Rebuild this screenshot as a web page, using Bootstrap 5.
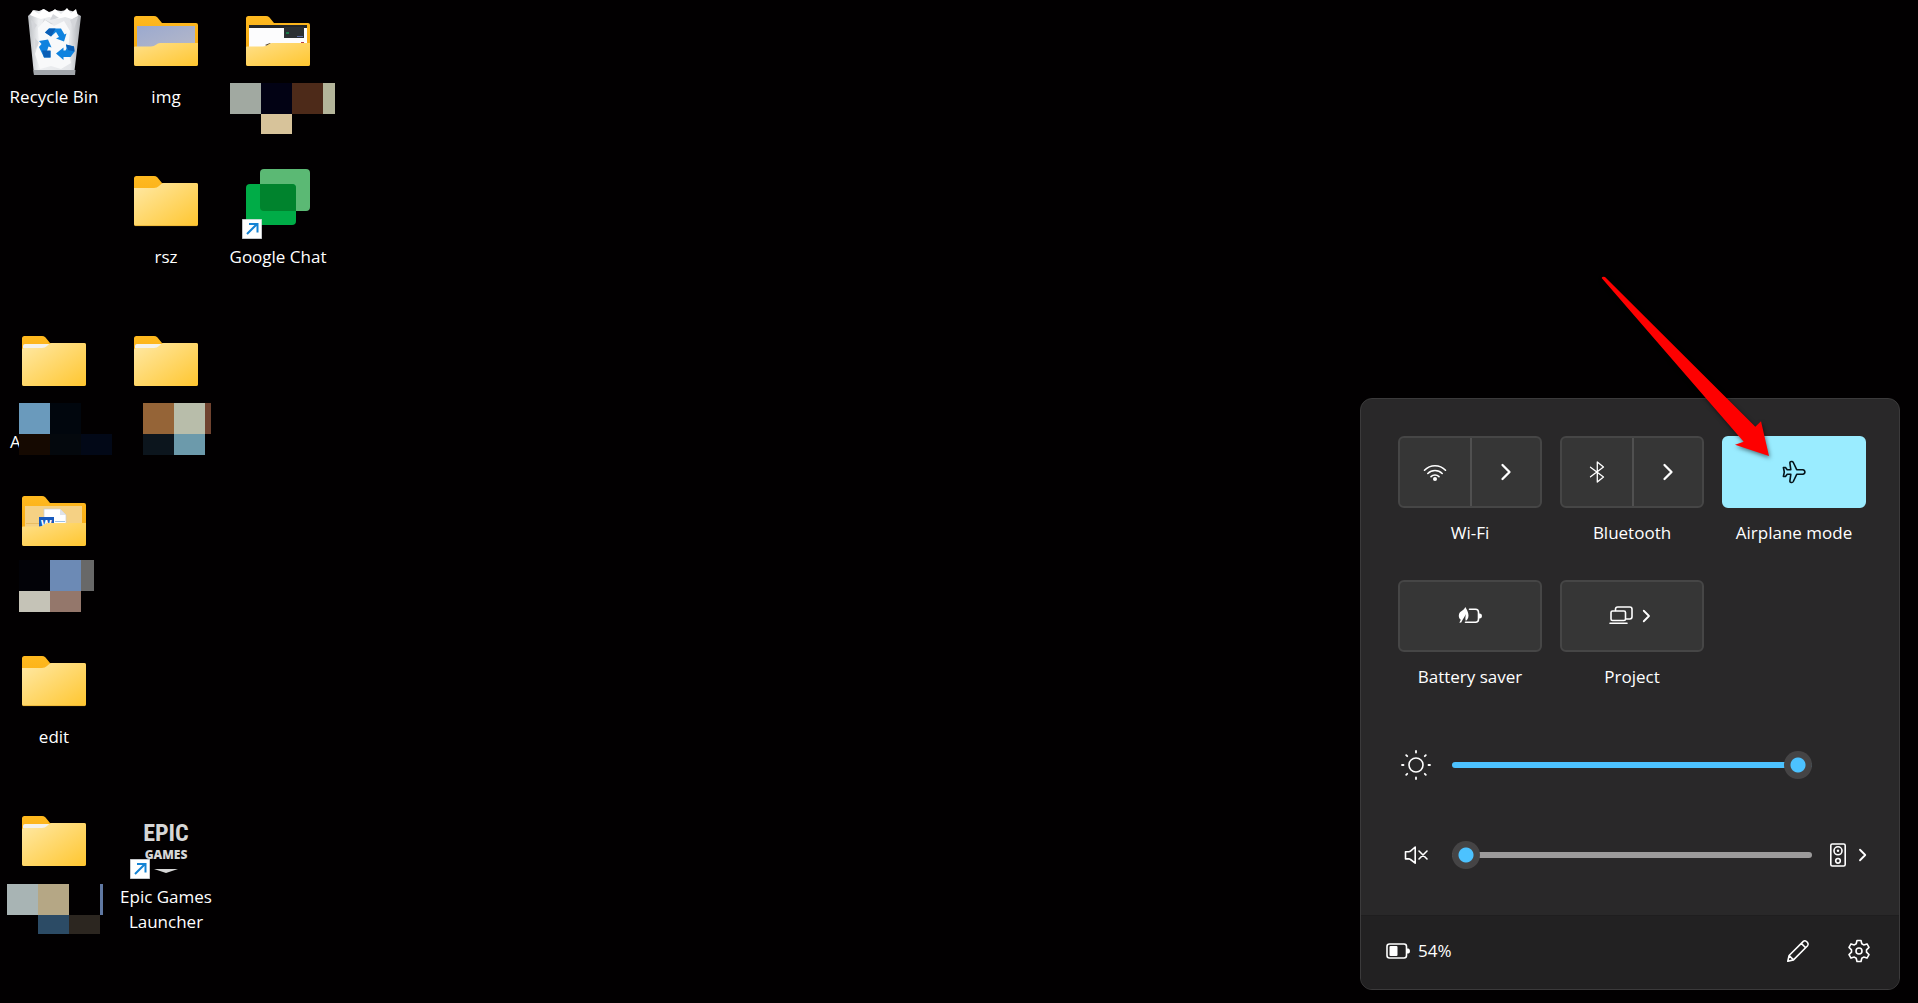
<!DOCTYPE html>
<html lang="en">
<head>
<meta charset="utf-8">
<meta name="viewport" content="width=device-width, initial-scale=1">
<title>Desktop – Quick settings</title>
<link rel="stylesheet" href="https://cdn.jsdelivr.net/npm/bootstrap@5.3.0/dist/css/bootstrap.min.css">
<style>
  body { background: #020001; color: #fff; font-family: "Open Sans", "Noto Sans", sans-serif; font-size: 17px; }
  .desk-col { width: 108px; }
  .desk-slot { height: 160px; }
  .desk-item { color: #fff; line-height: 25px; }
  .desk-item:hover { color: #fff; }
  .desk-icon { width: 72px; height: 80px; display: block; margin-bottom: 4px; }
  .desk-mosaic { top: 80px; left: 0; width: 112px; height: 60px; overflow: visible; }
  .desk-initial { padding: 25px 0 0 10px; }

  .quick-panel { right: 18px; bottom: 13px; width: 540px; background: #292829; border: 1px solid #3b3a3b; border-radius: 12px; }
  .quick-body { padding: 37px 33px 15px 37px; }
  .tile-grid { display: grid; grid-template-columns: repeat(3, 1fr); column-gap: 18px; row-gap: 34px; }
  .tile { height: 72px; background: #363636; border: 2px solid #464646; border-radius: 6px; overflow: hidden; }
  .tile-btn { background: transparent; border: 0; color: #fff; padding: 0; display: flex; align-items: center; justify-content: center; }
  .tile-btn + .tile-btn { border-left: 2px solid #505050; }
  .tile-on { background: #9aecff; border-color: #9aecff; }
  .tile-on .tile-btn { color: #06141a; }
  .tile-name { height: 26px; line-height: 26px; margin-top: 12px; font-weight: 500; }
  .line-icon { width: 24px; height: 24px; fill: none; stroke: currentColor; stroke-width: 1.6; stroke-linecap: round; stroke-linejoin: round; flex: none; }
  .line-icon .solid { fill: currentColor; stroke: none; }
  .chev { stroke-width: 2.3; }
  .chev-sm { width: 18px; height: 18px; stroke-width: 2.4; }

  .slider-area { padding-top: 30px; margin-right: -6px; }
  .slider-row { height: 90px; }
  .slider-sym { width: 36px; }
  .sun { width: 32px; height: 32px; }
  .level { -webkit-appearance: none; appearance: none; flex: none; width: 360px; height: 28px; margin: 0 0 0 18px; background: transparent; }
  .level::-webkit-slider-runnable-track { height: 6px; border-radius: 3px; background: #9c9b9b; }
  .level-full::-webkit-slider-runnable-track { background: #4cc2ff; }
  .level::-webkit-slider-thumb { -webkit-appearance: none; width: 28px; height: 28px; margin-top: -11px; border-radius: 50%; border: 0; background: radial-gradient(circle, #4cc2ff 0 7px, #454445 8px 14px); }
  .level::-moz-range-track { height: 6px; border-radius: 3px; background: #9c9b9b; }
  .level-full::-moz-range-track { background: #4cc2ff; }
  .level::-moz-range-thumb { width: 28px; height: 28px; border: 0; border-radius: 50%; background: radial-gradient(circle, #4cc2ff 0 7px, #454445 8px 14px); }
  .output-btn { margin-left: 14px; color: #fff; }

  .quick-foot { height: 74px; background: #222122; border-top: 1px solid #1f1e1f; border-radius: 0 0 11px 11px; padding: 0 28px 4px 25px; }
  .foot-actions { gap: 37px; }
  .pointer-arrow { left: 219px; top: -139px; width: 220px; height: 220px; pointer-events: none; filter: drop-shadow(1px 2px 2px rgba(0,0,0,.5)); }
</style>
</head>
<body>
<svg class="position-absolute" width="0" height="0" aria-hidden="true">
  <defs>
    <linearGradient id="gold" x1="0" y1="0" x2="1" y2="1"><stop offset="0" stop-color="#ffe9a6"/><stop offset="1" stop-color="#ffc62f"/></linearGradient>
    <linearGradient id="goldLow" x1="0" y1="0" x2="1" y2="1"><stop offset="0" stop-color="#ffe08a"/><stop offset="1" stop-color="#ffc62f"/></linearGradient>
    <linearGradient id="tab" x1="0" y1="0" x2="0" y2="1"><stop offset="0" stop-color="#ffb91f"/><stop offset="1" stop-color="#f3a60f"/></linearGradient>
    <linearGradient id="photo" x1="0" y1="0" x2="1" y2="1"><stop offset="0" stop-color="#9ba9cf"/><stop offset="1" stop-color="#b5b8c8"/></linearGradient>
    <linearGradient id="glass" x1="0" y1="0" x2="1" y2="0"><stop offset="0" stop-color="#b9bcc0"/><stop offset=".2" stop-color="#eef0f2"/><stop offset=".8" stop-color="#e3e5e8"/><stop offset="1" stop-color="#a7aaaf"/></linearGradient>
    <symbol id="folderBack" viewBox="0 0 72 80"><path fill="url(#tab)" d="M4 18.500q0-2.500 2.500-2.500H24q2 0 3.300 1.300L32 23h34q2 0 2 2v39q0 2-2 2H6q-2 0-2-2z"/></symbol>
    <symbol id="folderPlain" viewBox="0 0 72 80"><use href="#folderBack"/><path fill="url(#gold)" d="M4 28h20q3 0 5-2l2-1.700q1.500-1.300 3-1.300h32q2 0 2 2v39q0 2-2 2H6q-2 0-2-2z"/><path fill="none" stroke="#e9b234" stroke-width=".8" d="M5 65.600h62"/></symbol>
    <symbol id="folderDoc" viewBox="0 0 72 80"><use href="#folderBack"/><path fill="#f4f2ec" d="M5 26q0-2 2-2h25l-3 4H5z"/><path fill="url(#gold)" d="M4 30q0-2 2-2h18q3 0 5-2l2-1.700q1.500-1.300 3-1.300h32q2 0 2 2v39q0 2-2 2H6q-2 0-2-2z"/></symbol>
    <symbol id="folderFront" viewBox="0 0 72 80"><path fill="url(#goldLow)" d="M4 47.500q0-1 1-1h16q3 0 5-1.700l1.500-1q1-.8 3-.8H68v21q0 2-2 2H6q-2 0-2-2z"/></symbol>
    <symbol id="shortcut" viewBox="0 0 20 20"><path fill="#fff" stroke="#d5d9dd" stroke-width=".8" d="M.4.400h19.200v19.200H.4z"/><path fill="none" stroke="#1583d4" stroke-width="2" d="M5 15L15 5M7 5h8.500v8.500"/></symbol>
  </defs>
</svg>

<main class="position-relative min-vh-100 overflow-hidden">
  <nav class="d-flex gap-1" aria-label="Desktop icons">
    <div class="desk-col">
      <div class="desk-slot">
        <a href="#" class="desk-item d-flex flex-column align-items-center text-decoration-none text-center">
          <svg class="desk-icon" viewBox="0 0 72 80" aria-hidden="true">
            <path fill="url(#glass)" d="M10 16l6-6 5 1 5-2 5 3 6-2 6 1 6-1 5 1 9 5-7 59H16z"/>
            <path fill="#fff" d="M12 15l3-5 6 4 4-5 7 4 5-4 6 5 6-6 4 5 5-4 2 7-6 3-7-2-8 2-8-2-8 2-6-2z"/>
            <path fill="#d4d6da" d="M13 20l6 5-4 6zM52 20l8-3-4 12zM17 38l5 6-5 5zM50 50l7-6-3 14zM26 19l9 5-12 3zM20 58l8 5-7 3zM42 60l8 4-10 3zM35 14l6 4-9 2z"/>
            <path fill="#f8f9fa" d="M20 28l7-8 9 6 10-5 6 10-2 20 3 12-10 6-10-3-11 3-5-15 4-12z"/>
            <path fill="#a2a6ab" d="M15.500 70h42l-.5 5H16z"/>
            <path fill="#0f83df" d="M31 28.500h12l3.500 6 2-1-2.500 8-8-3 3-1.500-3-5-5 4.500-6-4z"/><path fill="#0a5eb5" d="M31 28.500h6.500l-4.500 8-6-4z"/>
            <path fill="#0f83df" d="M21 41l9-1.500 3.500 8-3-1-1.500 4.500h3.500v6.500H26L21 47l2.500-3z"/><path fill="#0a5eb5" d="M24 50.500h8.500v7H26z"/>
            <path fill="#0f83df" d="M48 44.500l8 2 .5 5-4 5.500h-7v3L38 53.500l7.500-6v3h2l1-2z"/><path fill="#0a5eb5" d="M48 44.500l8 2 .5 5-6.500-1.500z"/>
          </svg>
          <span>Recycle Bin</span>
        </a>
      </div>
      <div class="desk-slot"></div>
      <div class="desk-slot position-relative">
        <a href="#" class="desk-item d-block text-decoration-none" aria-label="Folder">
          <svg class="desk-icon mx-auto" aria-hidden="true"><use href="#folderDoc"/></svg>
          <span class="desk-initial d-block">A</span>
        </a>
        <svg class="desk-mosaic position-absolute" aria-hidden="true"><path fill="#6a9abc" d="M19 3h31v31H19z"/><path fill="#01060d" d="M50 3h31v31H50z"/><path fill="#150901" d="M19 34h31v21H19z"/><path fill="#04080d" d="M50 34h31v21H50z"/><path fill="#020817" d="M81 34h31v21H81z"/></svg>
      </div>
      <div class="desk-slot position-relative">
        <a href="#" class="desk-item d-block text-decoration-none" aria-label="Documents folder">
          <svg class="desk-icon mx-auto" viewBox="0 0 72 80" aria-hidden="true"><use href="#folderBack"/><path fill="#f5d184" d="M7 26h57v22H7z"/><path fill="#e9bd63" d="M8 43h56v1H8z"/><path fill="#fff" stroke="#c9ccd2" stroke-width=".7" d="M26 29h16l6 6v12H26z"/><path fill="#dfe3ea" d="M42 29v6h6z"/><path fill="#9cc0e6" d="M37 41h10v1H37z"/><path fill="#185abd" d="M21 37h15v11H21z"/><text x="23" y="48" font-family="Open Sans, sans-serif" font-weight="700" font-size="11" fill="#fff">W</text><use href="#folderFront"/></svg>
        </a>
        <svg class="desk-mosaic position-absolute" aria-hidden="true"><path fill="#020207" d="M19 0h31v31H19z"/><path fill="#6c8ab5" d="M50 0h31v31H50z"/><path fill="#686868" d="M81 0h13v31H81z"/><path fill="#c5c3b7" d="M19 31h31v21H19z"/><path fill="#94776b" d="M50 31h31v21H50z"/></svg>
      </div>
      <div class="desk-slot">
        <a href="#" class="desk-item d-flex flex-column align-items-center text-decoration-none text-center">
          <svg class="desk-icon" aria-hidden="true"><use href="#folderPlain"/></svg>
          <span>edit</span>
        </a>
      </div>
      <div class="desk-slot position-relative">
        <a href="#" class="desk-item d-block text-decoration-none" aria-label="Folder">
          <svg class="desk-icon mx-auto" aria-hidden="true"><use href="#folderDoc"/></svg>
        </a>
        <svg class="desk-mosaic position-absolute" aria-hidden="true"><path fill="#a8b4b4" d="M7 4h31v31H7z"/><path fill="#b5a785" d="M38 4h31v31H38z"/><path fill="#6078a2" d="M100 4h3v31h-3z"/><path fill="#2c4b65" d="M38 35h31v19H38z"/><path fill="#2c2620" d="M69 35h31v19H69z"/></svg>
      </div>
    </div>

    <div class="desk-col">
      <div class="desk-slot">
        <a href="#" class="desk-item d-flex flex-column align-items-center text-decoration-none text-center">
          <svg class="desk-icon" viewBox="0 0 72 80" aria-hidden="true"><use href="#folderBack"/><path fill="url(#photo)" d="M7 26h58v22H7z"/><use href="#folderFront"/></svg>
          <span>img</span>
        </a>
      </div>
      <div class="desk-slot">
        <a href="#" class="desk-item d-flex flex-column align-items-center text-decoration-none text-center">
          <svg class="desk-icon" aria-hidden="true"><use href="#folderPlain"/></svg>
          <span>rsz</span>
        </a>
      </div>
      <div class="desk-slot position-relative">
        <a href="#" class="desk-item d-block text-decoration-none" aria-label="Folder">
          <svg class="desk-icon mx-auto" aria-hidden="true"><use href="#folderDoc"/></svg>
        </a>
        <svg class="desk-mosaic position-absolute" aria-hidden="true"><path fill="#956437" d="M31 3h31v31H31z"/><path fill="#b8bdaa" d="M62 3h31v31H62z"/><path fill="#70432f" d="M93 3h6v31h-6z"/><path fill="#0c151d" d="M31 34h31v21H31z"/><path fill="#6c9aab" d="M62 34h31v21H62z"/></svg>
      </div>
      <div class="desk-slot"></div>
      <div class="desk-slot"></div>
      <div class="desk-slot">
        <a href="#" class="desk-item d-flex flex-column align-items-center text-decoration-none text-center">
          <svg class="desk-icon" viewBox="0 0 72 80" aria-hidden="true">
            <g fill="#d6d6d6" text-anchor="middle" font-weight="700"><text x="36" y="41" font-family="Liberation Sans Narrow, Roboto Condensed, Roboto, sans-serif" font-size="24">EPIC</text><text x="36" y="59" font-family="Open Sans, sans-serif" font-size="12" font-weight="800">GAMES</text></g>
            <path fill="#d6d6d6" d="M24 69h24l-12 4z"/>
            <use href="#shortcut" x="0" y="59" width="20" height="20"/>
          </svg>
          <span>Epic Games Launcher</span>
        </a>
      </div>
    </div>

    <div class="desk-col">
      <div class="desk-slot position-relative">
        <a href="#" class="desk-item d-block text-decoration-none" aria-label="Folder">
          <svg class="desk-icon mx-auto" viewBox="0 0 72 80" aria-hidden="true"><use href="#folderBack"/><path fill="#fcfcfd" d="M7 26h58v22H7z"/><path fill="#242628" d="M7 25h58v3H7z"/><path fill="#2c3033" d="M42 27h20v11H42z"/><path fill="#187a48" d="M44 32h3v2h-3z"/><path fill="#5d6da5" d="M55 36h6v1h-6z"/><path fill="#4a3b26" d="M23 45l5-2 2 2-3 2z"/><path fill="#b84040" d="M59 42h3v1h-3z"/><use href="#folderFront"/></svg>
        </a>
        <svg class="desk-mosaic position-absolute" aria-hidden="true"><path fill="#a1a9a1" d="M6 3h31v31H6z"/><path fill="#020214" d="M37 3h31v31H37z"/><path fill="#4d2a19" d="M68 3h31v31H68z"/><path fill="#b4b59a" d="M99 3h12v31H99z"/><path fill="#d7c39a" d="M37 34h31v20H37z"/></svg>
      </div>
      <div class="desk-slot">
        <a href="#" class="desk-item d-flex flex-column align-items-center text-decoration-none text-center">
          <svg class="desk-icon" viewBox="0 0 72 80" aria-hidden="true">
            <rect x="18" y="9" width="50" height="42" rx="4" fill="#5bb974"/><rect x="4" y="24" width="50" height="41" rx="4" fill="#00ac47"/><path fill="#00832d" d="M18 24h32q4 0 4 4v23H22q-4 0-4-4z"/>
            <use href="#shortcut" x="0" y="59" width="20" height="20"/>
          </svg>
          <span>Google Chat</span>
        </a>
      </div>
    </div>
  </nav>

  <section class="quick-panel position-absolute" aria-label="Quick settings">
    <div class="quick-body">
      <div class="tile-grid">
        <div>
          <div class="tile d-flex">
            <button type="button" class="tile-btn flex-fill w-50" aria-label="Wi-Fi"><svg class="line-icon" viewBox="0 0 24 24"><path d="M1.500 10.200a14.500 14.500 0 0 1 21 0M4.800 13.500a10.200 10.200 0 0 1 14.400 0M8 16.600a5.700 5.700 0 0 1 8 0"/><circle class="solid" cx="12" cy="19" r="2"/></svg></button>
            <button type="button" class="tile-btn flex-fill w-50" aria-label="Wi-Fi networks"><svg class="line-icon chev" viewBox="0 0 24 24"><path d="M8.500 5l7 7-7 7"/></svg></button>
          </div>
          <div class="tile-name text-center">Wi-Fi</div>
        </div>
        <div>
          <div class="tile d-flex">
            <button type="button" class="tile-btn flex-fill w-50" aria-label="Bluetooth"><svg class="line-icon" viewBox="0 0 24 24"><path stroke-width="1.300" d="M5.500 7.200L18.500 17l-6.200 5V2l6.200 5L5.500 16.800"/></svg></button>
            <button type="button" class="tile-btn flex-fill w-50" aria-label="Bluetooth devices"><svg class="line-icon chev" viewBox="0 0 24 24"><path d="M8.500 5l7 7-7 7"/></svg></button>
          </div>
          <div class="tile-name text-center">Bluetooth</div>
        </div>
        <div>
          <div class="tile tile-on d-flex">
            <button type="button" class="tile-btn w-100" aria-label="Airplane mode" aria-pressed="true"><svg class="line-icon" viewBox="0 0 24 24"><path d="M8.800 9.700L7.900 3.200q-.2-1.700 1.300-1.700h.6q1 0 1.500 1l3.400 7.200h6q2.200.3 2.200 2.300t-2.200 2.300h-6l-3.400 7.200q-.5 1-1.500 1h-.6q-1.500 0-1.300-1.700l.9-6.500H5.200l-1.700 2.200H1.400L2.300 12l-.9-4.500h2.100l1.700 2.200z"/></svg></button>
          </div>
          <div class="tile-name text-center">Airplane mode</div>
        </div>
        <div>
          <div class="tile d-flex">
            <button type="button" class="tile-btn w-100" aria-label="Battery saver"><svg class="line-icon" viewBox="0 0 24 24"><path d="M11.500 5.300h6q3 0 3 3v7q0 3-3 3h-10"/><path class="solid" d="M21 9.500h1q2 .3 2 2.500t-2 2.500h-1zM7.300 3c1.200 2.500 3.200 4.700 3.200 8.500 0 3-1.400 4.800-2.800 5.200-.6-2-.3-4.700.4-6.700C6.500 12.500 5 15 3.200 18.500L1.300 18.800l1.500-3C.2 14 .2 9.800 2.600 7.800 4.500 6.300 6.500 5.500 7.300 3z"/></svg></button>
          </div>
          <div class="tile-name text-center">Battery saver</div>
        </div>
        <div>
          <div class="tile d-flex">
            <button type="button" class="tile-btn w-100 gap-1" aria-label="Project"><svg class="line-icon" viewBox="0 0 24 24"><path d="M6.500 6.500V5.200q0-2.200 2.200-2.200h12.100Q23 3 23 5.200v7.600q0 2.200-2.200 2.200H17"/><rect x="2" y="7" width="14.500" height="9.500" rx="1.500"/><path d="M1 19.300h17"/></svg><svg class="line-icon chev-sm" viewBox="0 0 24 24"><path d="M9 5l7 7-7 7"/></svg></button>
          </div>
          <div class="tile-name text-center">Project</div>
        </div>
      </div>

      <div class="slider-area">
        <div class="slider-row d-flex align-items-center">
          <label for="brightness" class="slider-sym d-flex justify-content-center" aria-label="Brightness"><svg class="line-icon sun" viewBox="0 0 32 32"><circle cx="16" cy="16" r="7"/><path stroke-width="1.800" d="M16 2v1.500M16 28.500V30M2 16h1.500M28.500 16H30M6.200 6.200l1 1M24.800 24.800l1 1M25.800 6.200l-1 1M7.200 24.800l-1 1"/></svg></label>
          <input type="range" id="brightness" class="level level-full" min="0" max="100" value="100">
        </div>
        <div class="slider-row d-flex align-items-center">
          <label for="volume" class="slider-sym d-flex justify-content-center" aria-label="Volume"><svg class="line-icon" viewBox="0 0 24 24"><path d="M1.500 8.700h3.300q1 0 1.700-.6L11.200 4v16.200l-4.700-3.700q-.7-.6-1.700-.6H1.500zM15 8l8 8M23 8l-8 8"/></svg></label>
          <input type="range" id="volume" class="level" min="0" max="100" value="0">
          <button type="button" class="output-btn btn p-0 border-0 d-flex align-items-center gap-1" aria-label="Sound output"><svg class="line-icon" viewBox="0 0 24 24"><rect x="4.800" y="1" width="14.400" height="22" rx="1.500"/><circle cx="12" cy="7.800" r="4"/><circle class="solid" cx="12" cy="7.800" r="1.200"/><circle cx="12" cy="17.800" r="2.300"/></svg><svg class="line-icon chev-sm" viewBox="0 0 24 24"><path d="M8 5l7 7-7 7"/></svg></button>
        </div>
      </div>
    </div>

    <div class="quick-foot d-flex align-items-center justify-content-between">
      <div class="d-flex align-items-center gap-2">
        <svg class="line-icon" viewBox="0 0 24 24" aria-hidden="true"><rect x="1" y="5" width="19.500" height="14" rx="2.500"/><rect class="solid" x="3.500" y="7" width="8" height="10" rx="1"/><path class="solid" d="M21 9.500h1.500q1.500.5 1.500 2.500t-1.500 2.500H21z"/></svg>
        <span>54%</span>
      </div>
      <div class="foot-actions d-flex align-items-center">
        <button type="button" class="btn p-0 border-0 text-white d-flex" aria-label="Edit quick settings"><svg class="line-icon" viewBox="0 0 24 24"><path d="M1.800 22.200l1.300-5.700L17.300 2.400q1.500-1.300 3.200.1l1 1q1.400 1.700.1 3.200L7.500 20.900zM15.300 4.400l4.300 4.300M3.100 16.500l4.400 4.400"/></svg></button>
        <button type="button" class="btn p-0 border-0 text-white d-flex" aria-label="All settings"><svg class="line-icon" viewBox="0 0 24 24"><circle cx="12" cy="12" r="3"/><path d="M10 1.500h4l.8 3.300 1.900 1.100 3.300-1 2 3.500-2.500 2.400v2.400L22 15.600l-2 3.500-3.300-1-1.900 1.100-.8 3.300h-4l-.8-3.300-1.900-1.100-3.300 1-2-3.500 2.500-2.400v-2.400L2 8.400l2-3.500 3.300 1 1.900-1.100z"/></svg></button>
      </div>
    </div>

    <svg class="pointer-arrow position-absolute" viewBox="0 0 660 660" aria-hidden="true"><path fill="#fe0000" d="M65 54q2-6 10-3L526 500l17-16 24 104-102-34 26-9z"/></svg>
  </section>
</main>
<script src="https://cdn.jsdelivr.net/npm/bootstrap@5.3.0/dist/js/bootstrap.bundle.min.js"></script>
</body>
</html>
